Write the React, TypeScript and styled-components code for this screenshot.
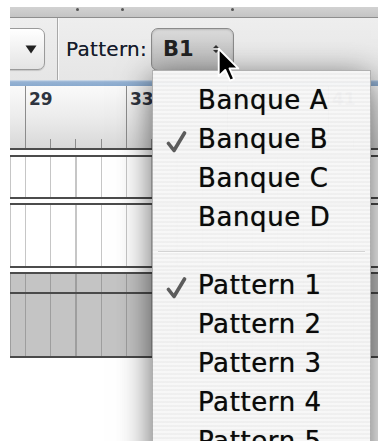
import React from "react";
import styled, { createGlobalStyle } from "styled-components";

const Global = createGlobalStyle`
  html, body { margin: 0; padding: 0; background: #ffffff; }
  body { font-family: "DejaVu Sans", "Liberation Sans", sans-serif; }
`;

const Frame = styled.div`
  position: relative;
  margin: 7px 0 0 10px;
  width: 368px;
  height: 434px;
  overflow: hidden;
  background: #ffffff;
  display: flex;
  flex-direction: column;
`;

const TopBand = styled.div`
  flex: 0 0 10px;
  background: linear-gradient(#d2d2d2, #c4c4c4);
  border-bottom: 1px solid #8e8e8e;
  display: flex;
  align-items: flex-start;
  padding-left: 66px;
`;

const Dot = styled.span<{ $gap: number }>`
  width: 3px;
  height: 3px;
  border-radius: 50%;
  background: #555;
  margin-top: 1px;
  margin-right: ${(p) => p.$gap}px;
`;

const Toolbar = styled.div`
  flex: 0 0 62px;
  display: flex;
  align-items: center;
  background: linear-gradient(#eeeeee, #e6e6e6);
`;

const LeftPopup = styled.div`
  margin-left: -20px;
  width: 55px;
  height: 42px;
  box-sizing: border-box;
  border: 1px solid #9a9a9a;
  border-radius: 7px;
  background: linear-gradient(#ffffff, #f0f0f0 55%, #e4e4e4);
  box-shadow: 0 1px 1px rgba(0, 0, 0, 0.15);
  display: flex;
  align-items: center;
  justify-content: flex-end;
  padding-right: 7px;
`;

const Sep = styled.div`
  align-self: stretch;
  width: 1px;
  background: #a8a8a8;
  box-shadow: 1px 0 0 #fafafa;
  margin: 0 8px 0 12px;
`;

const Label = styled.span`
  font-size: 20px;
  letter-spacing: 0.3px;
  color: #141a2a;
  text-shadow: 0 0 0.6px rgba(20, 26, 42, 0.6);
  margin-right: 4px;
`;

const PopButton = styled.div`
  width: 83px;
  height: 43px;
  box-sizing: border-box;
  border: 1px solid #8a8a8a;
  border-radius: 7px;
  background: linear-gradient(#dcdcdc, #c9c9c9 50%, #bdbdbd);
  box-shadow: inset 0 1px 2px rgba(0, 0, 0, 0.15);
  display: flex;
  align-items: center;
  padding-left: 11px;
  gap: 17px;
`;

const ButtonText = styled.span`
  font-size: 21px;
  font-weight: bold;
  color: #222;
`;

const BlueBar = styled.div`
  flex: 0 0 6px;
  background: linear-gradient(#d6e0ec, #95b2d3 30%, #8aaace);
`;

const Ruler = styled.div`
  flex: 0 0 62px;
  display: flex;
  background: linear-gradient(#fafafa, #ececec 50%, #d8d8d8);
`;

const RulerLead = styled.div`
  flex: 0 0 15px;
`;

const RulerCell = styled.div`
  flex: 0 0 101px;
  box-sizing: border-box;
  border-left: 1px solid #8c8c8c;
  padding: 4px 0 0 3px;
  background-image: repeating-linear-gradient(
    to right,
    transparent 0 24.25px,
    #8c8c8c 24.25px 25.25px
  );
  background-size: 100% 9px;
  background-repeat: no-repeat;
  background-position: 0 100%;
`;

const RulerNum = styled.span`
  font-size: 17px;
  font-weight: bold;
  color: #2e3440;
  line-height: 1;
`;

const Divider = styled.div<{ $h: number }>`
  flex: 0 0 ${(p) => p.$h}px;
  box-sizing: border-box;
  border-top: 2px solid #4c4c4c;
  border-bottom: 2px solid #4c4c4c;
  background: #ffffff;
`;

const Track = styled.div<{ $h: number; $gray?: boolean }>`
  flex: 0 0 ${(p) => p.$h}px;
  box-sizing: border-box;
  background-color: ${(p) => (p.$gray ? "#c4c4c4" : "#ffffff")};
  background-image: repeating-linear-gradient(
    to right,
    ${(p) => (p.$gray ? "#9e9e9e" : "#c6c6c6")} 0 1px,
    transparent 1px 25.25px
  );
  background-position: 15px 0;
  border-bottom: ${(p) => (p.$gray ? "2px solid #4a4a4a" : "none")};
`;

const Menu = styled.div`
  position: absolute;
  left: 142px;
  top: 63px;
  width: 219px;
  height: 420px;
  box-sizing: border-box;
  border: 1px solid rgba(120, 120, 120, 0.55);
  background: repeating-linear-gradient(
    to bottom,
    rgba(247, 247, 247, 0.975) 0 2px,
    rgba(239, 239, 239, 0.975) 2px 4px
  );
  box-shadow: 0 8px 32px rgba(0, 0, 0, 0.62);
  padding-top: 10px;
  display: flex;
  flex-direction: column;
`;

const Item = styled.div`
  height: 39px;
  line-height: 39px;
  display: flex;
  align-items: center;
  font-size: 26px;
  letter-spacing: 0.6px;
  color: #0a0a0a;
  text-shadow: 0 0 0.7px rgba(0, 0, 0, 0.65);
  white-space: nowrap;
`;

const CheckSlot = styled.span`
  flex: 0 0 45px;
  display: flex;
  justify-content: flex-start;
  padding-left: 13px;
  box-sizing: border-box;
  align-self: stretch;
  align-items: center;
`;

const MenuSep = styled.div`
  height: 29px;
  display: flex;
  align-items: center;
  padding: 0 5px;
  &::after {
    content: "";
    flex: 1;
    height: 1px;
    background: #d4d4d4;
    box-shadow: 0 1px 0 #fbfbfb;
  }
`;

const Cursor = styled.svg`
  position: absolute;
  left: 207px;
  top: 40px;
  z-index: 5;
`;

const Check = () => (
  <svg width="21" height="24" viewBox="0 0 21 24" style={{ marginTop: 4 }}>
    <path
      d="M2.5 13.5 L8 20.5 L18.5 3"
      fill="none"
      stroke="#5c5c5c"
      strokeWidth="3.6"
      strokeLinecap="round"
      strokeLinejoin="round"
    />
  </svg>
);

const MenuItem = ({ label, checked }: { label: string; checked?: boolean }) => (
  <Item>
    <CheckSlot>{checked ? <Check /> : null}</CheckSlot>
    {label}
  </Item>
);

export default function App() {
  const bars = ["29", "33", "37", "41"];
  return (
    <>
      <Global />
      <Frame>
        <TopBand>
          <Dot $gap={42} />
          <Dot $gap={107} />
          <Dot $gap={0} />
        </TopBand>
        <Toolbar>
          <LeftPopup>
            <svg width="12" height="9" viewBox="0 0 12 9">
              <path d="M0.5 0.5 H11.5 L6 8.5 Z" fill="#222" />
            </svg>
          </LeftPopup>
          <Sep />
          <Label>Pattern:</Label>
          <PopButton>
            <ButtonText>B1</ButtonText>
            <svg width="10" height="10" viewBox="0 0 10 10">
              <path d="M2 4 L5 1 L8 4 Z M2 6 L5 9 L8 6 Z" fill="#333" />
            </svg>
          </PopButton>
        </Toolbar>
        <BlueBar />
        <Ruler>
          <RulerLead />
          {bars.map((b) => (
            <RulerCell key={b}>
              <RulerNum>{b}</RulerNum>
            </RulerCell>
          ))}
        </Ruler>
        <Divider $h={9} />
        <Track $h={40} />
        <Divider $h={8} />
        <Track $h={61} />
        <Divider $h={8} />
        <Track $h={20} $gray />
        <Track $h={64} $gray />

        <Menu>
          <MenuItem label="Banque A" />
          <MenuItem label="Banque B" checked />
          <MenuItem label="Banque C" />
          <MenuItem label="Banque D" />
          <MenuSep />
          <MenuItem label="Pattern 1" checked />
          <MenuItem label="Pattern 2" />
          <MenuItem label="Pattern 3" />
          <MenuItem label="Pattern 4" />
          <MenuItem label="Pattern 5" />
        </Menu>

        <Cursor width="24" height="36" viewBox="0 0 14 21">
          <path
            d="M1 1 L1 17 L4.8 13.4 L7.6 19.6 L10 18.6 L7.3 12.5 L12.4 12.5 Z"
            fill="#000"
            stroke="#fff"
            strokeWidth="1.1"
            strokeLinejoin="round"
          />
        </Cursor>
      </Frame>
    </>
  );
}
